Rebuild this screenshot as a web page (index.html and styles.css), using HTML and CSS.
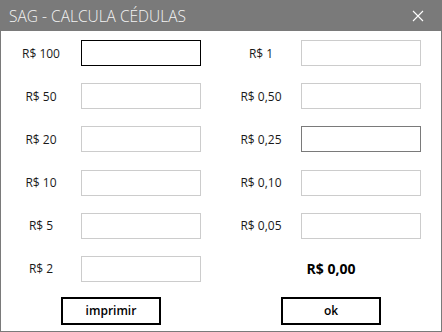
FILE: index.html
```html
<!DOCTYPE html>
<html lang="pt-BR">
<head>
    <meta charset="UTF-8">
    <meta name="viewport" content="width=device-width, initial-scale=1.0">
    <title>SAG - Calcula Cédulas</title>
    <link rel="stylesheet" href="styles.css">
</head>
<body>
    <div class="window">
        <div class="titlebar">
            <span class="title">SAG - CALCULA CÉDULAS</span>
            <svg class="close" width="12" height="12" viewBox="0 0 12 12">
                <path d="M1 1 L11 11 M11 1 L1 11" stroke="#fff" stroke-width="1.1" fill="none"/>
            </svg>
        </div>

        <div class="grid">
            <label for="n100">R$ 100</label>
            <input type="text" id="n100" class="focused">
            <span></span>
            <label for="m100">R$ 1</label>
            <input type="text" id="m100">

            <label for="n50">R$ 50</label>
            <input type="text" id="n50">
            <span></span>
            <label for="m50">R$ 0,50</label>
            <input type="text" id="m50">

            <label for="n20">R$ 20</label>
            <input type="text" id="n20">
            <span></span>
            <label for="m25">R$ 0,25</label>
            <input type="text" id="m25" class="hover">

            <label for="n10">R$ 10</label>
            <input type="text" id="n10">
            <span></span>
            <label for="m10">R$ 0,10</label>
            <input type="text" id="m10">

            <label for="n5">R$ 5</label>
            <input type="text" id="n5">
            <span></span>
            <label for="m5">R$ 0,05</label>
            <input type="text" id="m5">

            <label for="n2">R$ 2</label>
            <input type="text" id="n2">
            <span></span>
            <div class="total">R$ 0,00</div>
        </div>

        <div class="buttons">
            <button>imprimir</button>
            <button>ok</button>
        </div>
    </div>
</body>
</html>
```

FILE: styles.css
```css
html, body {
    margin: 0;
    padding: 0;
    background: #fff;
}
body {
    font-family: "Open Sans", "Noto Sans", Arial, sans-serif;
    color: #1a1a1a;
}
.window {
    width: 442px;
    height: 332px;
    box-sizing: border-box;
    border: 1px solid #7a7a7a;
    border-top: none;
    display: flex;
    flex-direction: column;
}
.titlebar {
    height: 31px;
    margin: 0 -1px;
    background-color: #7a7a7a;
    color: #f4f4f4;
    display: flex;
    align-items: center;
    justify-content: space-between;
    padding: 0 18px 0 9px;
}
.title {
    font-size: 15.5px;
    font-weight: 300;
}
.close {
    display: block;
}
.grid {
    display: grid;
    grid-template-columns: 80px 120px 20px 80px 120px;
    grid-auto-rows: 26px;
    row-gap: 17.2px;
    padding-top: 9px;
}
label {
    font-size: 12px;
    display: flex;
    align-items: center;
    justify-content: center;
}
input {
    box-sizing: border-box;
    height: 26px;
    border: 1px solid #cccccc;
    margin: 0;
    padding: 2px 4px;
    font-family: inherit;
    outline: none;
}
input.focused {
    border-color: #000;
}
input.hover {
    border-color: #7a7a7a;
}
.total {
    grid-column: 4 / 6;
    font-size: 14px;
    font-weight: bold;
    display: flex;
    align-items: center;
    justify-content: center;
    padding-left: 20px;
    color: #000;
}
.buttons {
    display: flex;
    gap: 120px;
    padding: 15px 0 0 60px;
}
button {
    width: 100px;
    height: 28px;
    background: #fff;
    border: 2px solid #000;
    font-family: inherit;
    font-size: 12px;
    font-weight: 600;
    color: #000;
    padding: 0;
}
```
